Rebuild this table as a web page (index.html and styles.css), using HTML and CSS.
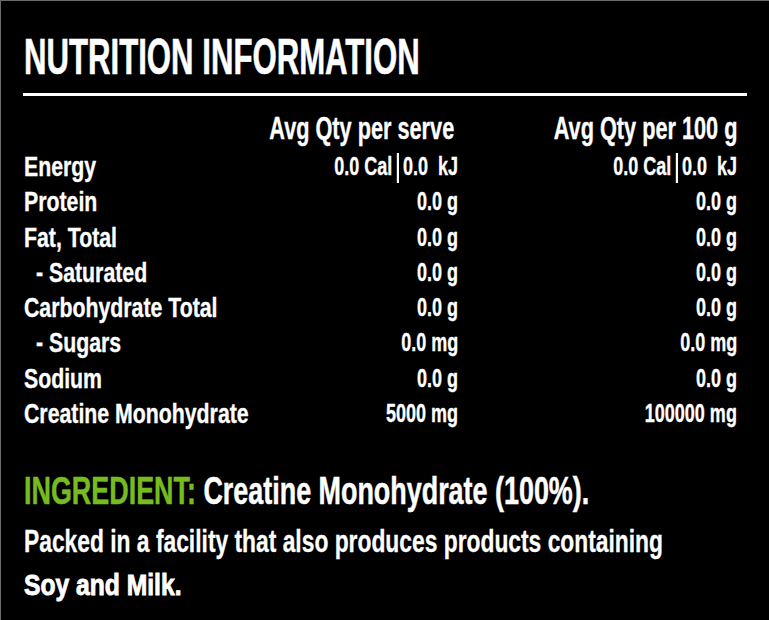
FILE: index.html
```html
<!DOCTYPE html>
<html lang="en">
<head>
<meta charset="utf-8">
<title>Nutrition Information</title>
<link rel="stylesheet" href="styles.css">
</head>
<body>
<main class="card">
  <h1 class="title"><span class="cx">NUTRITION INFORMATION</span></h1>
  <div class="rule"></div>
  <div class="facts">
    <div class="head"></div>
    <div class="head num"><span class="cx">Avg Qty per serve</span></div>
    <div class="head num"><span class="cx">Avg Qty per 100 g</span></div>

    <div class="label"><span class="cx">Energy</span></div>
    <div class="val"><span class="cx">0.0 Cal<span class="bar"></span>0.0&nbsp;&nbsp;kJ</span></div>
    <div class="val"><span class="cx">0.0 Cal<span class="bar"></span>0.0&nbsp;&nbsp;kJ</span></div>

    <div class="label"><span class="cx">Protein</span></div>
    <div class="val"><span class="cx">0.0 g</span></div>
    <div class="val"><span class="cx">0.0 g</span></div>

    <div class="label"><span class="cx">Fat, Total</span></div>
    <div class="val"><span class="cx">0.0 g</span></div>
    <div class="val"><span class="cx">0.0 g</span></div>

    <div class="label sub"><span class="cx">- Saturated</span></div>
    <div class="val"><span class="cx">0.0 g</span></div>
    <div class="val"><span class="cx">0.0 g</span></div>

    <div class="label"><span class="cx">Carbohydrate Total</span></div>
    <div class="val"><span class="cx">0.0 g</span></div>
    <div class="val"><span class="cx">0.0 g</span></div>

    <div class="label sub"><span class="cx">- Sugars</span></div>
    <div class="val"><span class="cx">0.0 mg</span></div>
    <div class="val"><span class="cx">0.0 mg</span></div>

    <div class="label"><span class="cx">Sodium</span></div>
    <div class="val"><span class="cx">0.0 g</span></div>
    <div class="val"><span class="cx">0.0 g</span></div>

    <div class="label"><span class="cx">Creatine Monohydrate</span></div>
    <div class="val"><span class="cx">5000 mg</span></div>
    <div class="val"><span class="cx">100000 mg</span></div>
  </div>

  <p class="ingredient"><span class="cx"><span class="green">INGREDIENT:</span> Creatine Monohydrate (100%).</span></p>
  <p class="packed"><span class="cx">Packed in a facility that also produces products containing</span></p>
  <p class="allergen"><span class="cx">Soy and Milk.</span></p>
</main>
</body>
</html>
```

FILE: styles.css
```css
* { box-sizing: border-box; }
html, body { margin: 0; padding: 0; background: #000; }
body {
  font-family: "Liberation Sans", Arial, sans-serif;
  font-weight: 700;
  color: #fff;
}
.card {
  width: 769px;
  height: 620px;
  border-top: 1px solid #6a6a6a;
  border-left: 1px solid #6a6a6a;
  padding: 0 22px 0 23px;
  overflow: hidden;
}
/* condensed text: the installed sans is scaled horizontally */
.cx {
  display: inline-block;
  white-space: nowrap;
  transform-origin: left center;
  transform: scaleX(var(--sx, 0.72));
  -webkit-text-stroke: var(--stroke, 0.35px) currentColor;
}
.num .cx, .val .cx { transform-origin: right center; }

.title {
  margin: 0;
  padding-top: 31px;
  font-size: 50px;
  line-height: 50px;
  font-weight: 700;
  white-space: nowrap;
  --sx: 0.623;
  --stroke: 0.6px;
}
.rule {
  height: 3px;
  background: #fff;
  margin-top: 11px;
  margin-left: -1px;
}
.facts {
  display: grid;
  grid-template-columns: minmax(0, 1fr) 200px 279px;
  margin-right: 10px;
  margin-top: 15px;
}
.head {
  font-size: 31px;
  line-height: 36px;
  height: 38px;
  white-space: nowrap;
  --sx: 0.70;
}
.head.num:nth-child(2) { padding-right: 4px; }
.num, .val {
  display: flex;
  justify-content: flex-end;
}
.label {
  font-size: 28px;
  line-height: 35.3px;
  white-space: nowrap;
  --sx: 0.76;
}
.sub { padding-left: 12px; }
.val {
  font-size: 25px;
  line-height: 35.3px;
  white-space: nowrap;
  --sx: 0.72;
}
.bar {
  display: inline-block;
  width: 3px;
  height: 30px;
  background: #fff;
  margin: 0 6px 0 6px;
  vertical-align: -8px;
}
.ingredient {
  margin: 38px 0 0;
  font-size: 39px;
  line-height: 44px;
  white-space: nowrap;
  --sx: 0.69;
  --stroke: 0.5px;
}
.green { color: #76bc21; }
.packed {
  margin: 6px 0 0;
  font-size: 32px;
  line-height: 44px;
  white-space: nowrap;
  --sx: 0.713;
  --stroke: 0.3px;
}
.allergen {
  margin: 0;
  font-size: 29px;
  line-height: 44px;
  white-space: nowrap;
  --sx: 0.85;
  --stroke: 0.9px;
}
```
